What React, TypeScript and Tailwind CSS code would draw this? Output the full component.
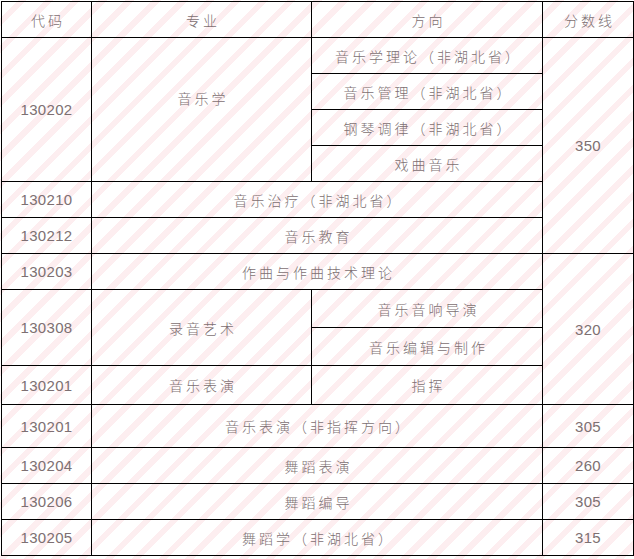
import React from "react";

const cn = "border border-black text-center align-middle p-0";
const zh = "font-['Noto_Sans_CJK_SC',sans-serif] font-light text-[14px] tracking-[3px] pl-[3px]";
const num = "font-['Liberation_Sans',Arial,sans-serif] text-[15px] tracking-[0.3px]";

function Z({ children, className = "" }: { children: React.ReactNode; className?: string }) {
  return <span className={zh + " " + className}>{children}</span>;
}
function N({ children }: { children: React.ReactNode }) {
  return <span className={num}>{children}</span>;
}

export default function App() {
  return (
    <div className="w-[634px] h-[559px] overflow-hidden bg-[repeating-linear-gradient(135deg,#ffffff_0px,#ffffff_13px,#fdeef0_13px,#fdeef0_19px)] text-[#7d7072]">
      <table className="ml-[1px] mt-[1px] border-collapse table-fixed w-[632px]">
        <colgroup>
          <col className="w-[90px]" />
          <col className="w-[220px]" />
          <col className="w-[231px]" />
          <col className="w-[91px]" />
        </colgroup>
        <tbody>
          <tr className="h-[36px]">
            <td className={cn}><Z>代码</Z></td>
            <td className={cn}><Z>专业</Z></td>
            <td className={cn}><Z>方向</Z></td>
            <td className={cn}><Z>分数线</Z></td>
          </tr>
          <tr className="h-[36px]">
            <td className={cn} rowSpan={4}><N>130202</N></td>
            <td className={cn + " pb-[24px]"} rowSpan={4}><Z>音乐学</Z></td>
            <td className={cn}><Z>音乐学理论（非湖北省）</Z></td>
            <td className={cn} rowSpan={6}><N>350</N></td>
          </tr>
          <tr className="h-[36px]">
            <td className={cn}><Z>音乐管理（非湖北省）</Z></td>
          </tr>
          <tr className="h-[36px]">
            <td className={cn}><Z>钢琴调律（非湖北省）</Z></td>
          </tr>
          <tr className="h-[36px]">
            <td className={cn}><Z>戏曲音乐</Z></td>
          </tr>
          <tr className="h-[36px]">
            <td className={cn}><N>130210</N></td>
            <td className={cn} colSpan={2}><Z>音乐治疗（非湖北省）</Z></td>
          </tr>
          <tr className="h-[36px]">
            <td className={cn}><N>130212</N></td>
            <td className={cn} colSpan={2}><Z>音乐教育</Z></td>
          </tr>
          <tr className="h-[36px]">
            <td className={cn}><N>130203</N></td>
            <td className={cn} colSpan={2}><Z>作曲与作曲技术理论</Z></td>
            <td className={cn} rowSpan={4}><N>320</N></td>
          </tr>
          <tr className="h-[38px]">
            <td className={cn} rowSpan={2}><N>130308</N></td>
            <td className={cn} rowSpan={2}><Z>录音艺术</Z></td>
            <td className={cn}><Z>音乐音响导演</Z></td>
          </tr>
          <tr className="h-[38px]">
            <td className={cn}><Z>音乐编辑与制作</Z></td>
          </tr>
          <tr className="h-[39px]">
            <td className={cn}><N>130201</N></td>
            <td className={cn}><Z>音乐表演</Z></td>
            <td className={cn}><Z>指挥</Z></td>
          </tr>
          <tr className="h-[43px]">
            <td className={cn}><N>130201</N></td>
            <td className={cn} colSpan={2}><Z>音乐表演（非指挥方向）</Z></td>
            <td className={cn}><N>305</N></td>
          </tr>
          <tr className="h-[36px]">
            <td className={cn}><N>130204</N></td>
            <td className={cn} colSpan={2}><Z>舞蹈表演</Z></td>
            <td className={cn}><N>260</N></td>
          </tr>
          <tr className="h-[36px]">
            <td className={cn}><N>130206</N></td>
            <td className={cn} colSpan={2}><Z>舞蹈编导</Z></td>
            <td className={cn}><N>305</N></td>
          </tr>
          <tr className="h-[36px]">
            <td className={cn}><N>130205</N></td>
            <td className={cn} colSpan={2}><Z>舞蹈学（非湖北省）</Z></td>
            <td className={cn}><N>315</N></td>
          </tr>
        </tbody>
      </table>
    </div>
  );
}
